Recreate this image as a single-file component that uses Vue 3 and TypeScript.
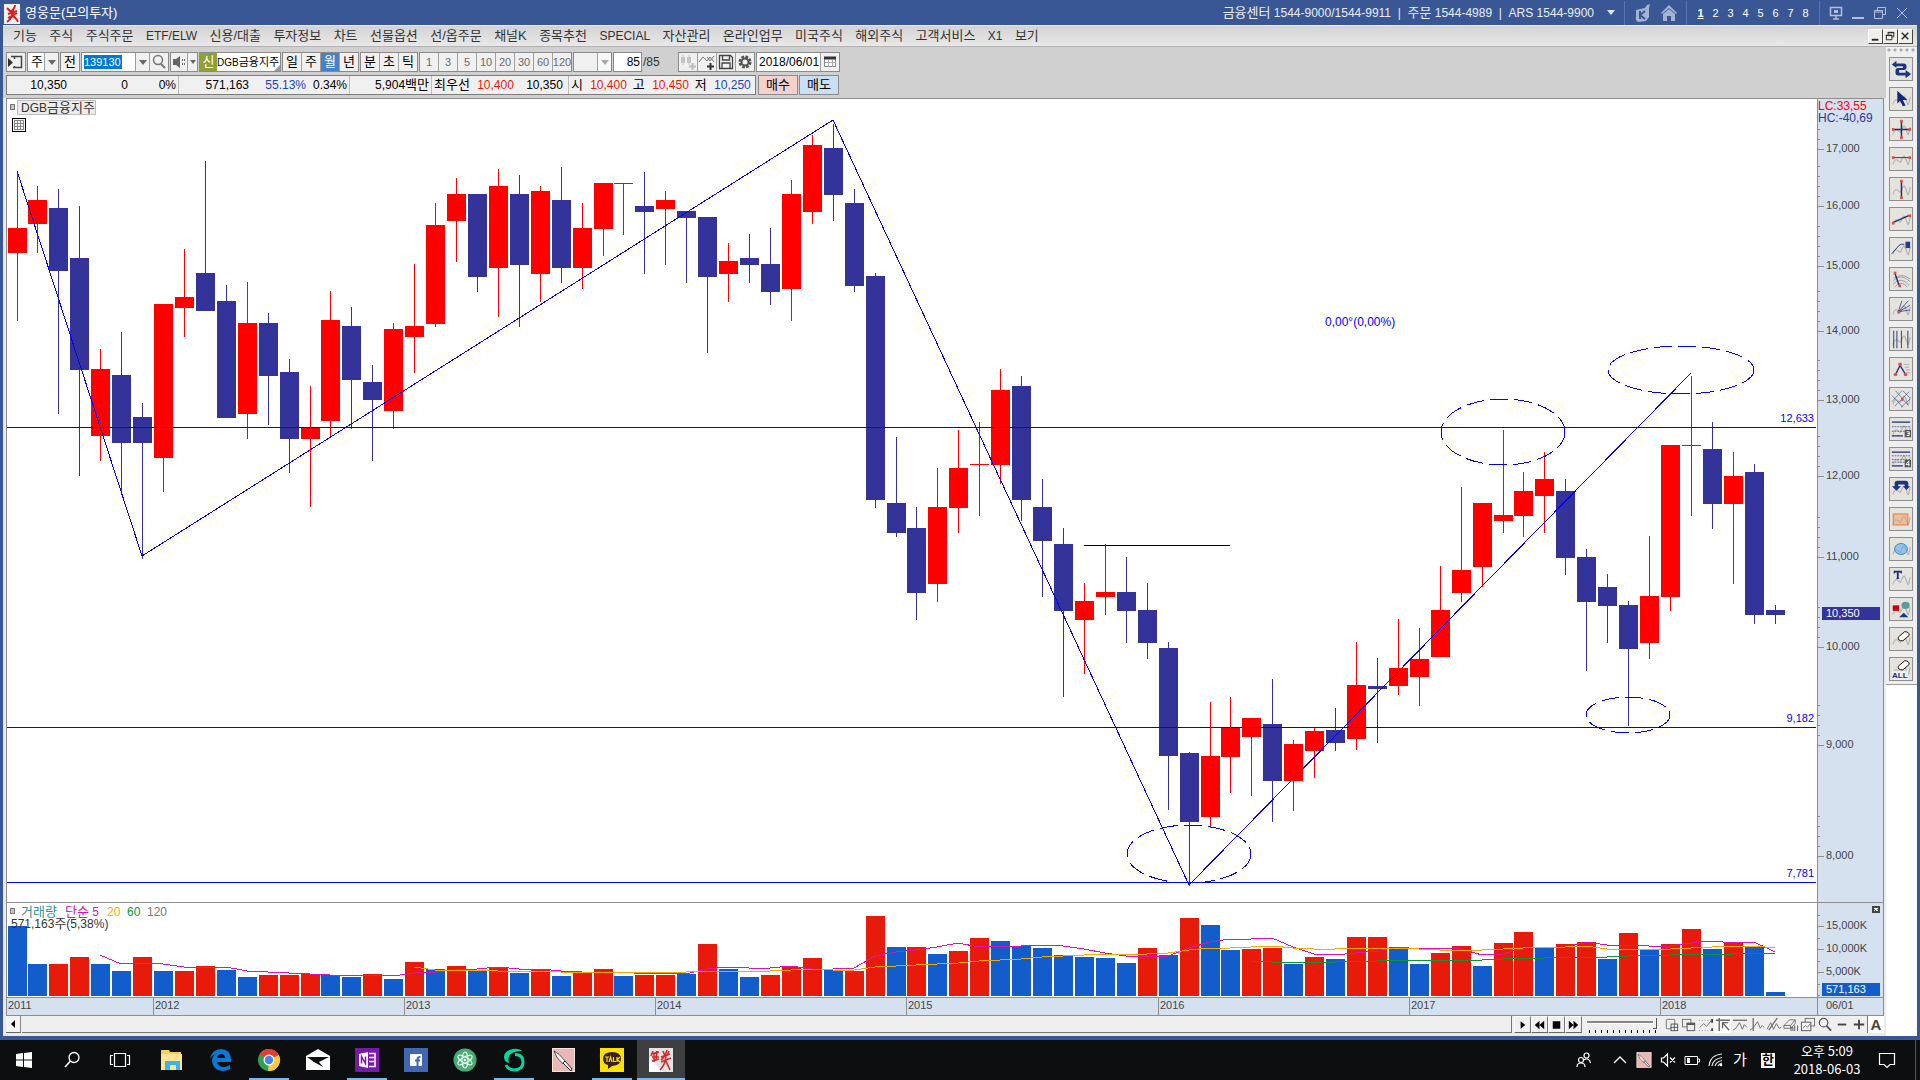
<script setup lang="ts">
import { ref } from 'vue'

type Tone = 'r' | 'b'
type Candle = [Tone, number, number, number, number]

const menus: string[] = ['기능', '주식', '주식주문', 'ETF/ELW', '신용/대출', '투자정보', '차트', '선물옵션', '선/옵주문', '채널K', '종목추천', 'SPECIAL', '자산관리', '온라인업무', '미국주식', '해외주식', '고객서비스', 'X1', '보기']
const isLatin = (s: string) => /^[A-Z0-9/]+$/.test(s)

const screens = [1, 2, 3, 4, 5, 6, 7, 8]
const periods = ['일', '주', '월', '년']
const intraday = ['분', '초', '틱']
const minutes = ['1', '3', '5', '10', '20', '30', '60', '120']
const period = ref('월')
const code = ref('139130')
const barCount = ref('85')
const date = ref('2018/06/01')
const speed = ref(100)

/* tone, high, body top, body bottom, low */
const candles: Candle[] = [
  ['r', 171, 228, 253, 321], ['r', 186, 200, 224, 253], ['b', 189, 208, 271, 414], ['b', 206, 258, 370, 476],
  ['r', 349, 369, 436, 461], ['b', 332, 375, 443, 492], ['b', 403, 417, 443, 559], ['r', 304, 304, 458, 492],
  ['r', 249, 297, 308, 337], ['b', 161, 273, 311, 311], ['b', 285, 301, 418, 418], ['r', 282, 323, 414, 439],
  ['b', 313, 323, 376, 425], ['b', 359, 372, 439, 473], ['r', 386, 428, 439, 507], ['r', 291, 320, 421, 436],
  ['b', 307, 326, 380, 429], ['b', 365, 382, 400, 461], ['r', 323, 329, 411, 429], ['r', 264, 326, 337, 373],
  ['r', 203, 225, 324, 327], ['r', 178, 194, 221, 262], ['b', 194, 194, 277, 292], ['r', 169, 186, 268, 317],
  ['b', 175, 194, 265, 327], ['r', 186, 191, 274, 302], ['b', 167, 200, 268, 283], ['r', 203, 228, 268, 289],
  ['r', 183, 183, 229, 256], ['r', 183, 183, 184, 235], ['b', 172, 206, 212, 274], ['r', 191, 200, 209, 265],
  ['b', 211, 211, 218, 283], ['b', 217, 217, 277, 353], ['r', 243, 261, 274, 302], ['b', 234, 258, 265, 283],
  ['b', 228, 264, 292, 305], ['r', 180, 194, 289, 321], ['r', 135, 145, 212, 224], ['b', 124, 148, 195, 221],
  ['b', 189, 203, 286, 292], ['b', 273, 276, 500, 508], ['b', 437, 503, 533, 537], ['b', 507, 528, 593, 620],
  ['r', 468, 507, 584, 602], ['r', 430, 468, 508, 533], ['r', 422, 464, 465, 516], ['r', 369, 390, 465, 484],
  ['b', 376, 386, 500, 521], ['b', 479, 507, 541, 597], ['b', 528, 544, 611, 697], ['r', 583, 601, 620, 674],
  ['r', 544, 592, 597, 615], ['b', 557, 592, 611, 643], ['b', 583, 610, 643, 659], ['b', 642, 648, 756, 810],
  ['b', 752, 753, 822, 886], ['r', 702, 756, 817, 828], ['r', 697, 728, 757, 793], ['r', 718, 718, 737, 796],
  ['b', 679, 724, 781, 822], ['r', 740, 744, 781, 811], ['r', 728, 731, 751, 778], ['b', 708, 730, 743, 751],
  ['r', 642, 685, 739, 750], ['b', 658, 686, 689, 743], ['r', 619, 668, 686, 695], ['r', 628, 659, 677, 706],
  ['r', 566, 610, 657, 657], ['r', 487, 570, 593, 602], ['r', 503, 503, 567, 587], ['r', 430, 515, 521, 533],
  ['r', 472, 491, 516, 537], ['r', 452, 479, 496, 533], ['b', 479, 491, 558, 575], ['b', 549, 557, 602, 671],
  ['b', 574, 587, 606, 643], ['b', 601, 605, 649, 726], ['r', 536, 596, 643, 659], ['r', 445, 445, 597, 611],
  ['r', 376, 445, 446, 516], ['b', 422, 449, 504, 529], ['r', 452, 476, 504, 584], ['b', 464, 472, 615, 624],
  ['b', 605, 610, 615, 624],
]

const volumeTones = 'bbrrbbrbrrbbrrrbbrbrbrbrbrbrrbrrbrbbrrrbrrbrbrrbbbbbbbrbrbbrrbrbrrbbrrbrrbrrbrbrrbrbb'
const volumeTops: number[] = [
  926, 964, 964, 957, 964, 971, 957, 971, 971, 966, 970, 977, 975, 975, 974, 975, 977, 974, 979, 962,
  969, 966, 970, 968, 973, 969, 976, 972, 969, 976, 975, 975, 974, 944, 969, 977, 975, 967, 958, 970,
  971, 916, 947, 947, 954, 951, 938, 941, 946, 948, 955, 957, 958, 963, 948, 955, 918, 925, 950, 949,
  948, 964, 957, 959, 937, 937, 947, 964, 953, 946, 966, 943, 932, 948, 944, 942, 959, 933, 950, 944,
  929, 949, 943, 946, 992,
]
const VOLUME_BASE = 996
const barX = (i: number) => Math.floor(8 + i * 20.93)

function movingAverage(span: number): string {
  const points: string[] = []
  for (let i = span - 1; i < volumeTops.length; i++) {
    const sum = volumeTops.slice(i - span + 1, i + 1).reduce((a, b) => a + b, 0)
    points.push(`${barX(i) + 9},${Math.round(sum / span)}`)
  }
  return points.join(' ')
}
const averages = [
  { color: '#dc14b4', points: movingAverage(5) },
  { color: '#f5a800', points: movingAverage(20) },
  { color: '#0a9632', points: movingAverage(60) },
]

const priceTicks = [
  { y: 149, label: '17,000' }, { y: 206, label: '16,000' }, { y: 266, label: '15,000' }, { y: 331, label: '14,000' },
  { y: 400, label: '13,000' }, { y: 476, label: '12,000' }, { y: 557, label: '11,000' }, { y: 647, label: '10,000' },
  { y: 745, label: '9,000' }, { y: 856, label: '8,000' },
]
const volumeTicks = [{ y: 926, label: '15,000K' }, { y: 949, label: '10,000K' }, { y: 972, label: '5,000K' }]
const levels = [{ y: 427, label: '12,633' }, { y: 727, label: '9,182' }, { y: 882, label: '7,781' }]
const ellipses = [
  { cx: 1503, cy: 432, rx: 62, ry: 33 }, { cx: 1681, cy: 370, rx: 73, ry: 24 },
  { cx: 1628, cy: 715, rx: 42, ry: 18 }, { cx: 1189, cy: 854, rx: 62, ry: 29 },
]
const years = [
  { x: 6, label: '2011' }, { x: 153, label: '2012' }, { x: 404, label: '2013' }, { x: 655, label: '2014' },
  { x: 906, label: '2015' }, { x: 1158, label: '2016' }, { x: 1409, label: '2017' }, { x: 1660, label: '2018' },
]

const wave = '<path d="M3 18C5 12 7 12 9 14S11 17 13 12S16 8 18 14S20 20 22 10" fill="none" stroke="#b4b4b0" stroke-width="1.3"/>'
const dot = (x: number, y: number) => `<rect x="${x - 1}" y="${y - 1}" width="3" height="3" fill="#e05050"/>`
const navy = 'stroke="#1b2f78" fill="none"'
const tools: { name: string; art: string }[] = [
  { name: '종목 전환', art: '<path d="M2 7l5-4v3h8q3 0 3 3v1q0 3-3 3h-5v3h7v-3l6 4.500-6 4.500v-3H9q-3 0-3-3v-2q0-3 3-3h5V9H7v2z" fill="#1d3580"/>' },
  { name: '선택', art: wave + '<path d="M8 3v14l3-3 3 6 3-1-3-6h5z" fill="#10297a"/>' },
  { name: '십자선', art: wave + `<path d="M3 12.500h18M12.500 3v18" ${navy} stroke-width="1.600"/>` + dot(3, 12) + dot(21, 12) + dot(12, 3) + dot(12, 21) },
  { name: '수평선', art: wave + `<path d="M3 10.500h18" ${navy}/>` + dot(3, 10) + dot(21, 10) },
  { name: '수직선', art: wave + `<path d="M12.500 3v18" ${navy} stroke-width="1.600"/>` + dot(12, 3) + dot(12, 21) },
  { name: '추세선', art: wave + `<path d="M3 16L21 8" ${navy} stroke-width="1.400"/>` + dot(3, 16) + dot(21, 8) },
  { name: '펜', art: wave + `<path d="M2 17L10 8q2-2 6-1" ${navy}/><path d="M15 7l3-3v6z" fill="#e8c070"/><path d="M17 4h5v7h-5z" fill="#1d3ca0"/>` },
  { name: '호', art: '<path d="M3 14q9-9 19 1M3 18q9-10 18 1M5 21q7-9 14 0M4 11q9-6 18 1" fill="none" stroke="#999"/><path d="M5 5l5 14" stroke="#1b2f78" stroke-width="1.500"/>' + dot(5, 5) + dot(10, 19) },
  { name: '부채선', art: wave + `<path d="M9 15L13 3M9 15L20 3M9 15L22 8M9 15L22 13" ${navy} stroke-width=".8"/>` + dot(9, 15) },
  { name: '시간대', art: wave + `<path d="M4 3v19M7.500 3v19M12.500 3v19M19.500 3v19" ${navy} stroke-width="1.200" opacity=".8"/>` },
  { name: '패턴', art: '<path d="M15 7h6M16 10h5M17 13h5M18 16h4" stroke="#aaa"/><path d="M6 18L11 8L17 18" fill="none" stroke="#1b2f78" stroke-width="1.500"/><circle cx="11" cy="7" r="2" fill="#e05050"/><circle cx="6" cy="18" r="2" fill="#e05050"/><circle cx="17" cy="18" r="2" fill="#e05050"/>' },
  { name: '격자', art: wave + `<path d="M2 8L14 21M6 3L20 19M14 3L22 11M2 15L13 3M5 20L21 4M12 21L22 12" ${navy} stroke-width=".7" opacity=".8"/>` + dot(13, 12) },
  { name: '3등분선', art: wave + `<path d="M2 4.500h20M2 19.500h12" ${navy} stroke-width="1.400"/><path d="M2 9.500h20M2 14.500h14" stroke="#5568a0" stroke-dasharray="2 1"/><rect x="16" y="13" width="7" height="8" fill="#555"/><path d="M18 15h3v4h-3M19 17h2" stroke="#fff" fill="none"/>` },
  { name: '4등분선', art: wave + `<path d="M2 4.500h20M2 19.500h12" ${navy} stroke-width="1.400"/><path d="M2 8.500h20M2 12.500h20M2 15.500h14" stroke="#5568a0" stroke-dasharray="2 1"/><rect x="16" y="13" width="7" height="8" fill="#555"/><path d="M20.500 20v-6l-3 4h4" stroke="#fff" fill="none"/>` },
  { name: '되돌림', art: wave + '<path d="M2 9h3V6q0-3 3-3h9q3 0 3 3v3h2l-4 4-4-4h2V7H9v2h3l-5 5z" fill="#1d3580"/>' },
  { name: '사각형', art: wave + '<rect x="3.500" y="6.500" width="16" height="12" fill="#f09a60" fill-opacity=".5" stroke="#dd7a40"/>' },
  { name: '원', art: wave + '<ellipse cx="12" cy="12" rx="7" ry="6" fill="#5aa8ea" fill-opacity=".55" stroke="#2c83d4"/>' },
  { name: '문자', art: wave + '<path d="M4 3h9v3h-1l-1-1H9.500v6l1 1h-4l1-1V5H6L5 6H4z" fill="#1b2f78"/>' },
  { name: '도형', art: wave + '<rect x="3" y="8" width="7" height="6" fill="#cc0010"/><ellipse cx="17" cy="8" rx="4.500" ry="4" fill="#5c9c94"/><path d="M10 21l5-5 5 5z" fill="#0c3c80"/>' },
  { name: '지우개', art: wave + '<path d="M9 10l7-6q5 0 5 4l-7 6q-6 0-5-4z" fill="#fff8f0" stroke="#000"/>' },
  { name: '모두 지우기', art: wave + '<path d="M9 9l7-6q5 0 5 4l-7 6q-6 0-5-4z" fill="#fff8f0" stroke="#000"/>' },
]

const g = 'fill="none" stroke="#707070"'
const footTools: { name: string; art: string; on?: boolean }[] = [
  { name: '새 창', art: `<rect x="2.500" y="2.500" width="9" height="10" rx="1" ${g}/><rect x="7.500" y="7.500" width="7" height="7" fill="#f4f4f4" stroke="#555"/><path d="M7 11h8M11 7v8" stroke="#555"/>` },
  { name: '겹치기', art: `<rect x="1.500" y="2.500" width="9" height="8" ${g}/><rect x="6.500" y="6.500" width="8" height="8" fill="#eee" stroke="#555"/><path d="M6 7.500h9" stroke="#555" stroke-width="2"/>` },
  { name: '구간 확대', art: `<path d="M1 3.500h14M1 14.500h14" stroke="#888" stroke-dasharray="1 2"/><path d="M2 11l4-4 3 3 5-6" ${g}/><path d="M15 2v4M15 12v3" stroke="#444" stroke-width="2"/>` },
  { name: '기준점', on: true, art: '<path d="M1 3.500h15M4.500 1v14" stroke="#666" stroke-width="1.500"/><path d="M8 6l7 8M8 12V6h6" fill="none" stroke="#666" stroke-width="1.500"/>' },
  { name: '수평 기준', art: `<path d="M1 3.500h15" stroke="#777" stroke-width="1.500"/><path d="M1 14l3-2 4-6 3 7 2-5 3 3" ${g}/>` },
  { name: '수직 기준', art: `<path d="M4.500 1v14" stroke="#777" stroke-width="1.500"/><path d="M1 14l4-3 4-6 3 7 2-3 2 2" ${g}/>` },
  { name: '추세', art: `<path d="M3 14L12 1" stroke="#777" stroke-width="1.500"/><path d="M1 13l4-7 3 7 3-6 3 5 2-1" ${g}/>` },
  { name: '전체 삭제', art: `<path d="M1 9l6-6h6l-5 6zM1 9v3h7V9M8 12l5-5V3" ${g}/><path d="M8.500 15v-4h2v4M12.500 9v6M15.500 9v6" stroke="#555" fill="none"/>` },
  { name: '차트 복사', art: `<rect x="5.500" y="1.500" width="10" height="8" ${g}/><rect x="1.500" y="5.500" width="10" height="9" fill="#f6f6f6" stroke="#555"/><path d="M3 12l3-3 2 2 3-4" ${g}/>` },
  { name: '돋보기', art: '<circle cx="7" cy="6" r="4.500" fill="none" stroke="#555" stroke-width="1.300"/><path d="M10 9.500l5 5" stroke="#555" stroke-width="2"/>' },
  { name: '축소', art: '<path d="M4 8h9" stroke="#444" stroke-width="2"/>' },
  { name: '확대', art: '<path d="M3 8h11M8.500 3v10" stroke="#444" stroke-width="2"/>' },
]
const playback = [
  { name: '재생', d: 'M6 4v8l5-4z' },
  { name: '뒤로', d: 'M8 3.500v9L3 8zM13 3.500v9L8 8z' },
  { name: '정지', d: 'M4 4h8v8H4z' },
  { name: '앞으로', d: 'M3 3.500v9l5-4.500zM8 3.500v9l5-4.500z' },
]

const knife = '<rect x="1" y="0" width="23" height="24" fill="#e9b8b4"/><rect x="1.500" y=".5" width="22" height="23" fill="none" stroke="#f7e4e2"/><path d="M3 3q5 2 11 10l-2 3Q5 10 3 3z" fill="#f4f4f4" stroke="#333" stroke-width=".8"/><path d="M12 15l2-2 7 8-1 2z" fill="#fff" stroke="#222"/>'
const apps: { name: string; art: string; state?: string }[] = [
  { name: '파일 탐색기', art: '<path d="M2 2h8l1 2h11v18H2z" fill="#f5cf62"/><path d="M2 6h21v16H2z" fill="#ffe493"/><path d="M6 22v-9h15v9h-4v-5h-6v5z" fill="#3cb4e8"/>' },
  { name: 'Edge', art: '<path d="M2 11Q4 1 13 1q9 0 10 10v3H9q1 5 7 5 3 0 6-2v4q-3 2-8 2-9-1-10-10 0-5 4-7-4 1-6 5zM9 10h8q0-4-4-4-3 0-4 4z" fill="#0a78d7"/>' },
  { name: 'Chrome', state: 'open', art: '<circle cx="12" cy="12" r="11" fill="#2ea24c"/><path d="M12 12L2.500 6.500A11 11 0 0 1 21.800 7z" fill="#e23f33"/><path d="M12 12L21.800 7A11 11 0 0 1 11 23z" fill="#fbcb34"/><circle cx="12" cy="12" r="5.500" fill="#fff"/><circle cx="12" cy="12" r="4.200" fill="#4585ee"/>' },
  { name: '메일', art: '<path d="M0 8l12-7 12 7v14H0z" fill="#fff"/><path d="M1 9h22L13 14l4 5-9-5z" fill="#0d0e10"/>' },
  { name: 'OneNote', state: 'open', art: '<rect width="24" height="24" fill="#7719aa"/><path d="M4 6l9-2v16l-9-2z" fill="#fff"/><path d="M6.500 15.500v-7l4 7v-7" stroke="#7719aa" stroke-width="1.500" fill="none"/><path d="M14 5.500h6v13h-6M14 9.500h5M14 13.500h5" fill="none" stroke="#fff" stroke-width="1.500"/>' },
  { name: 'Facebook', art: '<rect width="24" height="24" fill="#4267b2"/><rect x="6" y="6" width="12" height="12" rx="1" fill="#fff"/><path d="M13.500 18v-7q0-2 3-2M11 12.500h5" fill="none" stroke="#4267b2" stroke-width="2"/>' },
  { name: 'Atom', art: '<circle cx="12" cy="12" r="11.500" fill="#48ad75"/><g fill="none" stroke="#e5f6ea" stroke-width="1.100"><ellipse cx="12" cy="12" rx="3" ry="8"/><ellipse cx="12" cy="12" rx="3" ry="8" transform="rotate(60 12 12)"/><ellipse cx="12" cy="12" rx="3" ry="8" transform="rotate(120 12 12)"/></g><circle cx="12" cy="12" r="1.300" fill="#fff"/>' },
  { name: 'ScreenFlow', state: 'open', art: '<path d="M20 3Q16 0 11 1 2 3 2 9q0 5 5 6-2-7 3-10 4-2 10-2z" fill="#08d6a2"/><path d="M13 6.500q8 0 8 7.500 0 7-8 8-7 0-9-5" fill="none" stroke="#08d6a2" stroke-width="3"/>' },
  { name: '캡처', art: knife },
  { name: 'KakaoTalk', state: 'open', art: '<rect width="24" height="24" fill="#fae100"/><path d="M12 4q9 0 9 7 0 6-9 7l-4 3v-4q-5-1-5-6 0-7 9-7z" fill="#3a1d1d"/><path d="M5 9h4M7 9v5M9 14l1.500-5L12 14M13.500 9v4.500H16M17 9v5M20 9l-3 2.500L20 14" fill="none" stroke="#fae100" stroke-width="1.200"/>' },
  { name: '영웅문', state: 'active', art: '<rect width="24" height="24" fill="#e4e4e4"/><path d="M0 10l14 14H0z" fill="#fff"/><path d="M4 3l-2 5M2 6l8-2M5 5v9M8 3l-1 9M3 9h7M3 13l7-2M18 2q-2 7-6 10M14 3l2 5M20 3l-2 5M12 9l9-3M12 14l10-4M17 6q0 10-6 16M17 13l4 9" fill="none" stroke="#d02a2a" stroke-width="1.600"/>' },
]
</script>

<template>
  <div class="desktop">
    <div class="window">
      <header class="title-bar">
        <svg class="logo" viewBox="0 0 16 20"><rect width="16" height="20" fill="#f2f2f2" /><path d="M11 1q0 4-5 7M3 4l5 5M4 10l9-3M4 14l9-5M9 6q0 8-6 12M8 12q4 1 6 6" fill="none" stroke="#d02020" stroke-width="2" /></svg>
        <h1>영웅문(모의투자)</h1>
        <p class="phones"><span class="ko">금융센터</span> 1544-9000/1544-9911 &nbsp;|&nbsp; <span class="ko">주문</span> 1544-4989 &nbsp;|&nbsp; ARS 1544-9900</p>
        <button class="plain caret" aria-label="고객센터 목록"><i class="down"></i></button>
        <div class="quick">
          <button class="plain" aria-label="키움"><svg width="18" height="18" viewBox="0 0 18 18"><path d="M2 6l9-2 2-3 3-1-1 4v9l-3 4-8 1q-3-2-2-5z" fill="#a3b3d2" /><path d="M6 7v8M11 7l-5 4 5 4" stroke="#3a5795" stroke-width="2" fill="none" /></svg></button>
          <button class="plain" aria-label="홈"><svg width="18" height="18" viewBox="0 0 18 18"><path d="M1 9l8-8 8 8-1 1-7-6-7 6z M3 10l6-5 6 5v7h-4v-5H7v5H3z" fill="#a3b3d2" /></svg></button>
        </div>
        <nav class="screens"><button v-for="n in screens" :key="n" class="plain" :class="{ current: n === 1 }">{{ n }}</button></nav>
        <div class="window-keys">
          <button class="plain" aria-label="듀얼 모니터"><svg width="14" height="14" viewBox="0 0 14 14"><path d="M1.500 1.500h11v8h-11zM7 10v3M4 13h6" fill="none" stroke="#b4c0da" stroke-width="1.500" /><path d="M5 4h4v3H5z" fill="#b4c0da" /></svg></button>
          <button class="plain" aria-label="최소화"><svg width="14" height="14" viewBox="0 0 14 14"><path d="M1 12h12" stroke="#b4c0da" stroke-width="2" /></svg></button>
          <button class="plain" aria-label="이전 크기로"><svg width="14" height="14" viewBox="0 0 14 14"><path d="M4.500 4V1.500h8v7H10M1.500 4.500h8v8h-8zM1 6h9" fill="none" stroke="#b4c0da" /></svg></button>
          <button class="plain" aria-label="닫기"><svg width="14" height="14" viewBox="0 0 14 14"><path d="M2 2l10 10M12 2L2 12" stroke="#b4c0da" /></svg></button>
        </div>
      </header>

      <div class="menu-bar">
        <nav><a v-for="m in menus" :key="m" href="#" :class="{ latin: isLatin(m) }">{{ m }}</a></nav>
        <div class="child-keys">
          <button aria-label="창 최소화"><svg viewBox="0 0 14 14"><path d="M3 10.500h7" stroke="#222" stroke-width="2" /></svg></button>
          <button aria-label="창 복원"><svg viewBox="0 0 14 14"><path d="M4.500 5V2.500h6v5H9M2.500 5.500h6v5h-6zM2 6h7M4 3h7" fill="none" stroke="#222" /></svg></button>
          <button aria-label="창 닫기"><svg viewBox="0 0 14 14"><path d="M3 3l7 7M10 3l-7 7" stroke="#222" stroke-width="1.500" /></svg></button>
        </div>
      </div>

      <div class="work">
        <main>
          <div class="toolbar">
            <div class="row">
              <button class="box icon" aria-label="목록"><svg width="18" height="18" viewBox="0 0 18 18"><path d="M4 3.500h10.500v11H6M7.500 3v3M7.500 13v2" fill="none" stroke="#444" stroke-width="1.500" /><path d="M1 5v9l5-4.500z" fill="#333" /></svg></button>
              <label class="box combo kind"><select aria-label="구분"><option>주</option></select><i class="arrow"></i></label>
              <button class="box prev">전</button>
              <div class="box code">
                <span class="field"><input v-model="code" aria-label="종목코드"></span>
                <button class="arrow" aria-label="최근 종목"></button>
                <button class="find" aria-label="종목 검색"><svg width="18" height="18" viewBox="0 0 18 18"><circle cx="8" cy="7" r="4.500" fill="none" stroke="#777" stroke-width="1.500" /><path d="M11 11l4 4" stroke="#777" stroke-width="2" /></svg></button>
              </div>
              <div class="box sound">
                <button aria-label="소리"><svg width="16" height="18" viewBox="0 0 16 18"><path d="M2 6h3l4-3v12l-4-3H2z" fill="#666" /><path d="M11 7h1M13 7h1M11 11h1M13 11h1" stroke="#666" stroke-width="2" /></svg></button>
                <button class="arrow small" aria-label="소리 설정"></button>
              </div>
              <div class="box name"><b>신</b><span>DGB<span class="ko">금융지주</span></span></div>
              <div class="box group"><button v-for="p in periods" :key="p" :class="{ on: p === period }" @click="period = p">{{ p }}</button></div>
              <div class="box group"><button v-for="p in intraday" :key="p" @click="period = p">{{ p }}</button></div>
              <div class="box group dim"><button v-for="m in minutes" :key="m" disabled>{{ m }}</button></div>
              <label class="box combo blank"><select aria-label="주기" disabled><option></option></select><i class="arrow"></i></label>
              <input v-model="barCount" class="box count" aria-label="봉 개수">
              <span class="total">/85</span>
              <div class="box group">
                <button aria-label="종목 추가"><svg width="18" height="18" viewBox="0 0 18 18"><path d="M2 4h4v6H2zM8 4h4v6H8z" fill="#c4c4c4" /><path d="M4 2v10M10 2v10" stroke="#c4c4c4" /><path d="M10 13.500h7M13.500 10v7" stroke="#bbb" stroke-width="2" /></svg></button>
                <button aria-label="지표 추가"><svg width="18" height="18" viewBox="0 0 18 18"><path d="M1 9l4-5 4 4 3-4 4 5M9 4l3 4 4-5" fill="none" stroke="#777" /><path d="M9 13.500h7M12.500 10v7" stroke="#333" stroke-width="2" /></svg></button>
                <button aria-label="저장"><svg width="18" height="18" viewBox="0 0 18 18"><path d="M2.500 2.500h11l2 2v11h-13zM5.500 3v4h7V3M5 15.500V10h8v5.500" fill="none" stroke="#444" stroke-width="1.300" /></svg></button>
                <button aria-label="설정"><svg width="18" height="18" viewBox="0 0 18 18"><circle cx="9" cy="9" r="5" fill="none" stroke="#555" stroke-width="3" stroke-dasharray="2.600 1.300" /><circle cx="9" cy="9" r="3.500" fill="none" stroke="#555" stroke-width="2" /></svg></button>
              </div>
              <div class="box date"><input v-model="date" aria-label="날짜"><button aria-label="달력"><svg width="16" height="18" viewBox="0 0 16 18"><path d="M2.500 4.500h11v9h-11z" fill="#fff" stroke="#888" /><path d="M2 5h12" stroke="#333" stroke-width="3" /><path d="M3 9.500h11M6.500 7v7M10.500 7v7" stroke="#aaa" /></svg></button></div>
            </div>
            <div class="row">
              <dl class="quote">
                <dd class="q1">10,350</dd><dd class="q2">0</dd><dd class="q3 bar">0%</dd>
                <dd class="q4">571,163</dd><dd class="q5 down-text">55.13%</dd><dd class="q6 bar">0.34%</dd>
                <dd class="q7 bar">5,904<span class="ko">백만</span></dd>
                <dt>최우선</dt><dd class="q8 up-text">10,400</dd><dd class="q9 bar">10,350</dd>
                <dt>시</dt><dd class="q8 up-text">10,400</dd><dt class="mid">고</dt><dd class="q8 up-text">10,450</dd><dt class="mid">저</dt><dd class="q8 down-text">10,250</dd>
              </dl>
              <button class="trade buy">매수</button>
              <button class="trade sell">매도</button>
            </div>
          </div>

          <svg class="chart" viewBox="6 98 1878 918" shape-rendering="crispEdges" role="img" aria-label="DGB금융지주 월봉 차트">
            <rect x="6" y="98" width="1878" height="918" fill="#fff" />
            <rect x="1818" y="99" width="65" height="917" fill="#d6e1f0" />
            <rect x="7" y="998" width="1876" height="17" fill="#d6e1f0" />
            <g fill="#8e8e8e">
              <rect x="6" y="98" width="1878" height="1" /><rect x="6" y="98" width="1" height="918" />
              <rect x="1883" y="98" width="1" height="918" /><rect x="1817" y="98" width="1" height="918" />
              <rect x="6" y="902" width="1878" height="1" /><rect x="6" y="997" width="1878" height="1" /><rect x="6" y="1015" width="1878" height="1" />
              <template v-for="t in priceTicks" :key="t.label">
                <rect x="1818" :y="t.y" width="6" height="1" />
                <rect v-for="k in (t.y === 149 ? 2 : 4)" :key="k" x="1818" :y="t.y - k * 10" width="2" height="1" />
              </template>
              <rect v-for="t in volumeTicks" :key="t.label" x="1818" :y="t.y" width="6" height="1" />
              <rect v-for="y in [915, 938, 961, 984, 995]" :key="y" x="1818" :y="y" width="2" height="1" />
              <rect v-for="y in years.slice(1)" :key="y.label" :x="y.x" y="998" width="1" height="17" />
            </g>

            <g v-for="(c, i) in candles" :key="i" :fill="c[0] === 'r' ? '#ff0000' : '#333399'">
              <rect :x="barX(i) + 9" :y="c[1]" width="1" :height="c[4] - c[1]" />
              <rect :x="barX(i)" :y="c[2]" width="19" :height="c[3] - c[2]" />
            </g>
            <g fill="#0000ff"><rect v-for="l in levels" :key="l.y" x="7" :y="l.y" width="1809" height="1" /></g>
            <rect x="1084" y="545" width="146" height="1" fill="#000" />
            <polyline points="17,171 142,556 833,120 1189,885 1691,373" fill="none" stroke="#0000ff" />
            <ellipse v-for="e in ellipses" :key="e.cx" v-bind="e" fill="none" stroke="#0000ff" stroke-dasharray="18 6" />

            <rect v-for="(y, i) in volumeTops" :key="'v' + i" :x="barX(i)" :y="y" width="19" :height="VOLUME_BASE - y" :fill="volumeTones[i] === 'r' ? '#e81a0a' : '#125ccb'" />
            <polyline v-for="a in averages" :key="a.color" :points="a.points" fill="none" :stroke="a.color" />

            <rect x="1822" y="607" width="58" height="13" fill="#333399" />
            <rect x="1822" y="983" width="58" height="13" fill="#125ccb" />
            <rect x="1872" y="906" width="8" height="7" fill="#444" /><path d="M1874 908l4 3M1878 908l-4 3" stroke="#fff" />
            <g fill="#c4c4c4" stroke="#777"><rect x="10.500" y="104.500" width="4" height="5" /><rect x="10.500" y="908.500" width="4" height="5" /></g>
            <rect x="17.500" y="100.500" width="78" height="14" fill="#ececec" stroke="#bebebe" />
            <rect x="12.500" y="118.500" width="13" height="13" fill="#f4f4f4" stroke="#000" />
            <path d="M14.500 120.500h9v9h-9zM14 123.500h10M17.500 121v9M20.500 121v9M14 126.500h10" fill="none" stroke="#888" />

            <g class="small axis">
              <text v-for="t in priceTicks" :key="t.label" x="1826" :y="t.y + 3">{{ t.label }}</text>
              <text v-for="t in volumeTicks" :key="t.label" x="1826" :y="t.y + 3">{{ t.label }}</text>
              <text v-for="y in years" :key="y.label" :x="y.x + 2" y="1009">{{ y.label }}</text>
              <text x="1826" y="1009">06/01</text>
              <text x="1826" y="617" class="on-dark">10,350</text>
              <text x="1826" y="993" class="on-dark">571,163</text>
            </g>
            <text x="1818" y="110" fill="#ff0000">LC:33,55</text>
            <text x="1818" y="122" fill="#333399">HC:-40,69</text>
            <g class="small" fill="#0000ff" text-anchor="end">
              <text v-for="l in levels" :key="l.label" x="1814" :y="l.y - 5">{{ l.label }}</text>
            </g>
            <text x="1325" y="326" fill="#0000ff">0,00°(0,00%)</text>
            <text x="21" y="112" fill="#333">DGB<tspan class="ko">금융지주</tspan></text>
            <text x="21" y="916" class="ko" fill="#2c9090">거래량</text>
            <text x="65" y="916" fill="#dc14b4"><tspan class="ko">단순</tspan> 5</text>
            <text x="107" y="916" fill="#f5a800">20</text>
            <text x="127" y="916" fill="#0a9632">60</text>
            <text x="147" y="916" fill="#777">120</text>
            <text x="11" y="928" fill="#333">571,163<tspan class="ko">주</tspan>(5,38%)</text>
          </svg>

          <div class="foot">
            <button class="scroll-left" aria-label="왼쪽으로"><svg width="14" height="14" viewBox="0 0 14 14"><path d="M9 3v8L5 7z" /></svg></button>
            <div class="track"></div>
            <button v-for="p in playback" :key="p.name" class="play" :aria-label="p.name"><svg viewBox="0 0 16 16"><path :d="p.d" /></svg></button>
            <label class="speed"><input v-model="speed" type="range" aria-label="재생 속도"><i></i></label>
            <button v-for="t in footTools" :key="t.name" class="foot-tool" :class="{ on: t.on }" :aria-label="t.name"><svg viewBox="0 0 17 17" v-html="t.art"></svg></button>
            <button class="foot-tool on letter" aria-label="자동">A</button>
          </div>
        </main>

        <aside>
          <div class="tools">
            <button v-for="t in tools" :key="t.name" :aria-label="t.name"><svg viewBox="0 0 24 24" v-html="t.art"></svg><small v-if="t.name === '모두 지우기'">ALL</small></button>
          </div>
        </aside>
      </div>
    </div>

    <footer class="taskbar">
      <button class="sys" aria-label="시작"><svg width="16" height="16" viewBox="0 0 16 16"><path d="M0 2l7-1v6.500H0zM8 1l8-1v7.500H8zM0 8.500h7V15l-7-1zM8 8.500h8V16l-8-1z" fill="#fff" /></svg></button>
      <button class="sys" aria-label="검색"><svg width="18" height="18" viewBox="0 0 18 18"><circle cx="11" cy="6.500" r="5" fill="none" stroke="#fff" stroke-width="1.300" /><path d="M7.500 10L2 16" stroke="#fff" stroke-width="1.500" /></svg></button>
      <button class="sys" aria-label="작업 보기"><svg width="22" height="16" viewBox="0 0 22 16"><path d="M5.500 1.500h11v13h-11zM4 3.500H1.500v9H4M18 3.500h2.500v9H18" fill="none" stroke="#fff" stroke-width="1.200" /></svg></button>
      <div class="apps"><button v-for="a in apps" :key="a.name" :class="a.state" :aria-label="a.name"><svg width="24" height="24" viewBox="0 0 24 24" v-html="a.art"></svg></button></div>
      <div class="tray">
        <button class="people" aria-label="피플"><svg width="16" height="16" viewBox="0 0 16 16"><g fill="none" stroke="#fff" stroke-width="1.200"><circle cx="10.500" cy="3.500" r="2.500" /><circle cx="5" cy="8" r="2.500" /><path d="M1 15q0-4 4-4t4 4M7.500 8q6-3 7 3" /></g></svg></button>
        <button aria-label="숨겨진 아이콘"><svg width="16" height="16" viewBox="0 0 16 16"><path d="M2 11l6-6 6 6" fill="none" stroke="#fff" stroke-width="1.300" /></svg></button>
        <button aria-label="캡처"><svg width="16" height="16" viewBox="0 0 25 24" v-html="knife"></svg></button>
        <button aria-label="소리 없음"><svg width="16" height="16" viewBox="0 0 16 16"><path d="M1.500 6h2l4-4v12l-4-4h-2zM10 5.500l5 5M15 5.500l-5 5" fill="none" stroke="#fff" stroke-width="1.200" /></svg></button>
        <button aria-label="배터리"><svg width="16" height="16" viewBox="0 0 16 16"><path d="M1 4.500h12.500v8H1zM14 7h1.500v3H14" fill="none" stroke="#fff" /><path d="M3 6h3v5H3z" fill="#fff" /></svg></button>
        <button aria-label="Wi-Fi"><svg width="16" height="16" viewBox="0 0 16 16"><g fill="none" stroke="#ddd" stroke-width="1.200"><path d="M1 14Q2 3 14 2M4 14Q5 7 14 5.500M7 14q1-4 7-5.500M10 14q1-2 4-3" /></g><circle cx="13" cy="13" r="1.300" fill="#fff" /></svg></button>
        <button class="ime">가</button>
        <button class="hangul"><b>한</b></button>
        <div class="clock"><span>오후 5:09</span><span>2018-06-03</span></div>
        <button class="note" aria-label="알림"><svg width="18" height="18" viewBox="0 0 18 18"><path d="M1.500 2.500h15v11h-4.500l-3 3-3-3H1.500z" fill="none" stroke="#fff" stroke-width="1.200" /></svg></button>
        <i class="peek"></i>
      </div>
    </footer>
  </div>
</template>

<style>
body { margin: 0; background: #0d0e10; }
</style>

<style scoped>
* { box-sizing: border-box; }
.desktop { display: flex; flex-direction: column; min-height: 100vh; font: 12px/14px 'Liberation Sans', 'Noto Sans CJK KR', sans-serif; color: #000; }
button, input, select { font: inherit; color: inherit; padding: 0; margin: 0; border: 0; background: none; border-radius: 0; }
button { display: flex; align-items: center; justify-content: center; }
svg { display: block; }
.ko { font-size: 13px; }
.window { display: flex; flex-direction: column; flex: 1; background: #3a5795; padding: 0 3px 4px; }

.title-bar { display: flex; align-items: center; height: 25px; padding-right: 5px; color: #fff; }
.logo { width: 16px; height: 20px; margin: 2px 5px 0 1px; }
h1 { margin: 0 auto 0 0; font-size: 13px; font-weight: 400; line-height: 16px; }
.phones { margin: 0; white-space: pre; color: #e8edf6; }
.caret { width: 22px; height: 20px; margin: 0 2px 0 6px; }
.down { border: 4px solid transparent; border-top: 5px solid #dfe6f2; border-bottom: 0; }
.quick { display: flex; gap: 8px; padding: 0 8px 0 9px; border: solid #5b74aa; border-width: 0 1px; height: 24px; align-items: center; }
.screens { display: flex; padding: 0 6px; }
.screens button { width: 15px; height: 18px; font-size: 11px; }
.screens .current { font-weight: 700; text-decoration: underline; }
.window-keys { display: flex; gap: 8px; padding: 0 3px 0 9px; border-left: 1px solid #5b74aa; height: 24px; align-items: center; }

.menu-bar { display: flex; justify-content: space-between; align-items: center; height: 22px; padding: 0 4px 0 10px; border-top: 1px solid #eee; border-bottom: 1px solid #b2b2b2; background: linear-gradient(#d3d3d3, #e9e9e9); }
.menu-bar nav { display: flex; justify-content: space-between; width: 1026px; }
.menu-bar a { color: #333; text-decoration: none; font-size: 13px; line-height: 18px; white-space: nowrap; }
.menu-bar a.latin { font-size: 12px; }
.child-keys { display: flex; }
.child-keys button { width: 15px; height: 15px; background: #f0efea; border: 1px solid #fff; border-right-color: #444; border-bottom-color: #444; }
.child-keys svg { width: 13px; height: 13px; }

.work { display: flex; flex: 1; background: #eaeaea; }
main { flex: 1; min-width: 0; padding: 0 2px 3px 0; }
.toolbar { display: flex; flex-direction: column; gap: 3px; padding: 5px 0 3px 3px; background: #d0d0d0; margin-right: -2px; }
.row { display: flex; gap: 1px; height: 20px; }
.box { display: flex; flex: none; height: 20px; border: 1px solid #8a8a8a; background: #f0f0f0; }
.box > button { height: 18px; }
.icon, .prev { width: 20px; }
.prev, .kind { font-size: 13px; }
.kind { width: 32px; }
.combo select { flex: 1; min-width: 0; appearance: none; background: #fff; padding-left: 3px; }
.arrow { flex: none; width: 14px; height: 18px; border-left: 1px solid #a0a0a0; background: #f0f0f0; display: flex; align-items: center; justify-content: center; }
.arrow::after { content: ''; border: 4px solid transparent; border-top: 5px solid #666; border-bottom: 0; }
.small.arrow { width: 10px; }
.small.arrow::after { border-width: 4px 3px 0; }
.blank { width: 39px; }
.blank select { background: #f0f0f0; }
.blank .arrow { background: #f8f8f8; }
.blank .arrow::after { border-top-color: #aaa; }
.code { width: 88px; }
.field { display: flex; align-items: center; flex: 1; min-width: 0; background: #fff; padding-left: 2px; }
.code input { width: 38px; height: 14px; font-size: 11px; background: #0078d7; color: #fff; }
.find { width: 19px; border-left: 1px solid #a0a0a0; }
.sound { width: 28px; }
.sound svg { width: 16px; }
.name { width: 82px; position: relative; white-space: nowrap; background: #fff; align-items: center; }
.name b { flex: none; width: 17px; background: #8fa03a; color: #fff; font-weight: 400; font-size: 13px; line-height: 18px; text-align: center; }
.name > span { flex: none; font-size: 10px; }
.name .ko { font-size: 11px; }
.name::after { content: ''; position: absolute; right: 0; bottom: 0; border: 3px solid #999; border-left-color: transparent; border-top-color: transparent; }
.group button { width: 19px; font-size: 13px; border-left: 1px solid #a0a0a0; }
.group button:first-child { border-left: 0; width: 18px; }
.group .on { background: #4a80c4; color: #fff; }
.group.dim button { font-size: 11px; color: #6a6a6a; }
.count { width: 29px; background: #fff; text-align: right; padding-right: 1px; }
.total { width: 34px; line-height: 20px; color: #333; }
.date { width: 84px; }
.date input { flex: 1; min-width: 0; background: #fff; font-size: 12px; padding-left: 2px; }
.date button { width: 19px; border-left: 1px solid #a0a0a0; }

.quote { display: flex; align-items: center; width: 750px; flex: none; height: 20px; margin: 0 1px 0 0; border: 1px solid #7c7c7c; background: #f0f0f0; }
dt, dd { margin: 0; line-height: 18px; text-align: right; flex: none; white-space: nowrap; }
dt { font-size: 13px; padding-left: 2px; text-align: left; }
dt.mid { padding-left: 6px; }
.bar { border-right: 1px solid #bbb; padding-right: 2px; }
.q1 { width: 60px; } .q2 { width: 61px; } .q3 { width: 51px; } .q4 { width: 70px; } .q5 { width: 57px; }
.q6 { width: 44px; } .q7 { width: 82px; } .q8 { width: 44px; } .q9 { width: 55px; padding-right: 5px; }
.up-text { color: #e81a0a; }
.down-text { color: #1446c8; }
.trade { width: 40px; height: 20px; border: 1px solid #8a8a8a; font-size: 13px; }
.buy { background: #f6d0cb; }
.sell { background: #c9dff4; }

.chart { width: calc(100% - 3px); height: auto; margin-left: 3px; }
.chart text { font-size: 12px; }
.chart .small text { font-size: 11px; }
.chart .ko, .chart text.ko { font-size: 13px; }
.axis { fill: #444; }
.on-dark { fill: #fff; }

.foot { display: flex; height: 17px; margin-left: 3px; background: #efefef; }
.scroll-left { width: 15px; background: #f4f4f4; border-right: 1px solid #888; border-bottom: 1px solid #666; }
.track { flex: 1; margin: 0 2px 0 1px; border: solid #777; border-width: 0 1px 1px 0; background: #efefef; }
.play { flex: none; width: 17px; border: 1px solid #fff; border-right-color: #777; border-bottom-color: #666; background: #f0f0f0; }
.play svg { width: 16px; height: 16px; }
.speed { width: 81px; padding: 3px 6px 0 5px; }
.speed input { appearance: none; display: block; width: 70px; height: 8px; background: linear-gradient(transparent 2px, #888 2px 4px, #fff 4px 5px, transparent 5px); }
.speed input::-webkit-slider-thumb { appearance: none; width: 4px; height: 11px; background: #f0f0f0; border-right: 1px solid #555; border-bottom: 1px solid #555; }
.speed i { display: block; width: 68px; height: 3px; margin: 3px 0 0 2px; background: repeating-linear-gradient(90deg, #000 0 1px, transparent 1px 6px); }
.foot-tool { flex: none; width: 17px; }
.foot-tool svg { width: 16px; height: 16px; }
.foot-tool.on { background: #fff; }
.letter { border-left: 1px solid #777; font: 700 15px/16px 'Liberation Sans', sans-serif; color: #444; }

aside { width: 31px; background: #fff; }
.tools { display: flex; flex-direction: column; align-items: center; gap: 6px; padding: 10px 1px 3px 0; background: radial-gradient(circle at 3px 3px, #aaa 1px, transparent 2px) 0 0 / 6px 6px repeat-x #efefef; border-bottom: 1px solid #999; }
.tools button { position: relative; width: 24px; height: 24px; border: 1px solid #8e8e8e; background: #e5e3dd; }
.tools svg { width: 22px; height: 22px; }
.tools small { position: absolute; left: 2px; bottom: 0; font: 700 8px/9px 'Liberation Sans', sans-serif; color: #1b2f78; background: #eee; }

.taskbar { display: flex; height: 40px; background: #0d0e10; color: #fff; }
.sys { width: 48px; height: 40px; }
.apps { display: flex; gap: 1px; margin-left: 3px; }
.apps button { width: 48px; height: 40px; border-bottom: 2px solid transparent; padding-top: 2px; }
.apps .open { background: linear-gradient(#76b9ed, #76b9ed) 50% 100% / 40px 2px no-repeat border-box; }
.apps .active { background: #3e3f41; border-bottom-color: #76b9ed; }
.tray { display: flex; align-items: center; margin-left: auto; }
.tray button { width: 24px; height: 40px; }
.tray .people { margin-right: 12px; }
.tray .ime { font-size: 15px; width: 24px; }
.tray .hangul { width: 32px; }
.hangul b { width: 14px; height: 15px; background: #fff; color: #000; font-size: 13px; line-height: 14px; }
.clock { display: flex; flex-direction: column; align-items: center; width: 86px; font: 13px/18px 'Noto Sans CJK KR', sans-serif; }
.tray .note { width: 34px; }
.peek { width: 5px; height: 40px; margin-left: 11px; border-left: 1px solid #555; }
</style>
